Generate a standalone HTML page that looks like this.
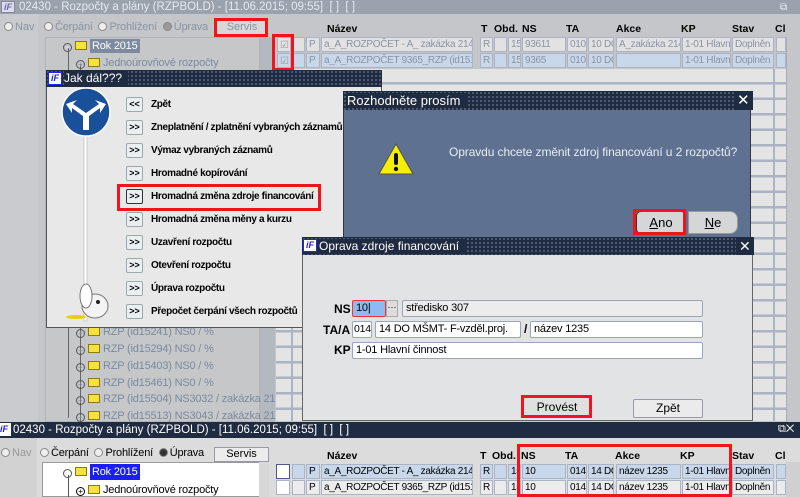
<!DOCTYPE html>
<html><head><meta charset="utf-8">
<style>
*{margin:0;padding:0;box-sizing:border-box}
body{width:800px;height:497px;overflow:hidden;position:relative;background:#c4c6c9;font-family:"Liberation Sans",Arial,sans-serif;font-size:11px;color:#000}
.a{position:absolute}
.c{position:absolute;border:1px solid #aab4c4;background:#e2e2e2;height:15px;line-height:13px;padding-left:2px;white-space:nowrap;overflow:hidden;color:#8a94a4;font-size:10px;letter-spacing:-0.3px}
.sel{background:#c8d8ea}
.h{position:absolute;font-weight:bold;font-size:10.5px}
.tb{position:absolute;height:18px;background:#1f2b40;color:#fff;font-size:13px;line-height:18px;padding-left:4px;
background-image:radial-gradient(#56627a 0.8px,transparent 1.2px);background-size:4px 4px;}
.tb span.t{background:#1f2b40;padding-right:6px}
.btn{position:absolute;width:17px;height:15px;border:1px solid #9aa;background:#eceff2;font-size:9px;font-weight:bold;text-align:center;line-height:13px;border-radius:2px}
.mi{position:absolute;left:151px;font-weight:bold;font-size:10px;letter-spacing:-0.35px;white-space:nowrap}
.fld{position:absolute;height:17px;border:1px solid #9aa6b8;background:#fff;font-size:11px;line-height:15px;padding-left:3px;white-space:nowrap;overflow:hidden;border-radius:2px;letter-spacing:-0.2px}
.lbl{position:absolute;font-weight:bold;font-size:12px}
.red{position:absolute;border:3px solid #f0141e}
.tree{position:absolute;color:#7b8aa0;font-size:11px;white-space:nowrap;letter-spacing:-0.2px}
.fol{display:inline-block;width:12px;height:9px;background:#f6e23c;border:1px solid #8a7a10;vertical-align:-1px;margin-right:3px}
.pl{display:inline-block;width:9px;height:9px;border:1px solid #555;border-radius:50%;vertical-align:-1px;margin-right:3px;font-size:8px;line-height:7px;text-align:center}
.rb{display:inline-block;width:9px;height:9px;border:1px solid #888;border-radius:50%;background:#eee;vertical-align:-1px;margin-right:2px}
</style></head><body>

<div class="a" style="left:0;top:0;width:800px;height:14px;background:#9aa2ae;color:#e6e9ee;font-size:11.5px;line-height:14px;padding-left:19px">02430 - Rozpočty a plány (RZPBOLD) - [11.06.2015; 09:55]&nbsp; [ ]&nbsp; [ ]</div>
<div class="a" style="left:1px;top:1px;width:14px;height:12px;background:#dde;border:1px solid #889;color:#66a;font-size:9px;font-weight:bold;font-style:italic;line-height:10px;text-align:center">iF</div>
<div class="a" style="left:780px;top:2px;color:#eef;font-size:10px">⧉</div>
<div class="a" style="left:0;top:14px;width:38px;height:410px;background:#c9cbce"></div>
<div class="a" style="left:4px;top:21px;color:#8a94a4"><span class="rb"></span>Nav</div>
<div class="a" style="left:44px;top:21px;color:#8a94a4;letter-spacing:-0.2px"><span class="rb"></span>Čerpání &nbsp;<span class="rb"></span>Prohlížení &nbsp;<span class="rb" style="background:#999"></span>Úprava</div>
<div class="a" style="left:217px;top:21px;width:50px;height:14px;background:#d8d8d8;color:#8a94a4;text-align:center;line-height:13px">Servis</div>
<div class="red" style="left:214px;top:18px;width:54px;height:19px"></div>

<div class="a" style="left:45px;top:37px;width:215px;height:385px;background:#c6c7c9;border:1px solid #b0b4ba"></div>
<div class="a" style="left:260px;top:37px;width:15px;height:385px;background:#b4b8bf"></div>
<div class="a" style="left:68px;top:48px;width:1px;height:370px;background:#666"></div>
<div class="a" style="left:80px;top:64px;width:1px;height:360px;background:#666"></div>
<div class="tree" style="left:63px;top:40px;color:#fff"><span class="pl">-</span><span class="fol"></span><span style="background:#7d8aa0;padding:1px 2px">Rok 2015</span></div>
<div class="tree" style="left:76px;top:57px"><span class="pl">+</span><span class="fol"></span>Jednoúrovňové rozpočty</div>
<div class="tree" style="left:76px;top:326px"><span class="pl">+</span><span class="fol"></span>RZP (id15241) NS0 / %</div>
<div class="tree" style="left:76px;top:343px"><span class="pl">+</span><span class="fol"></span>RZP (id15294) NS0 / %</div>
<div class="tree" style="left:76px;top:360px"><span class="pl">+</span><span class="fol"></span>RZP (id15403) NS0 / %</div>
<div class="tree" style="left:76px;top:377px"><span class="pl">+</span><span class="fol"></span>RZP (id15461) NS0 / %</div>
<div class="tree" style="left:76px;top:393px"><span class="pl">+</span><span class="fol"></span>RZP (id15504) NS3032 / zakázka 21289</div>
<div class="tree" style="left:76px;top:410px"><span class="pl">+</span><span class="fol"></span>RZP (id15513) NS3043 / zakázka 21292</div>

<div class="h" style="left:327px;top:23px">Název</div>
<div class="h" style="left:481px;top:23px">T</div>
<div class="h" style="left:494px;top:23px">Obd.</div>
<div class="h" style="left:522px;top:23px">NS</div>
<div class="h" style="left:566px;top:23px">TA</div>
<div class="h" style="left:616px;top:23px">Akce</div>
<div class="h" style="left:681px;top:23px">KP</div>
<div class="h" style="left:732px;top:23px">Stav</div>
<div class="h" style="left:775px;top:23px">Cl</div>

<div class="a" style="left:276px;top:69px;width:511px;height:352px;background:repeating-linear-gradient(#e4e4e4 0 13px,#aab4c4 13px 15.5px)"></div>
<div class="a" style="left:291px;top:69px;width:2px;height:352px;background:#aab4c4"></div>
<div class="a" style="left:773px;top:69px;width:2px;height:352px;background:#aab4c4"></div>
<div class="a" style="left:786px;top:37px;width:14px;height:386px;background:#c4c6c9;border-left:1px solid #aab"></div>

<div class="c" style="left:277px;top:37px;width:14px"></div>
<div class="c" style="left:292px;top:37px;width:13px"></div>
<div class="c" style="left:306px;top:37px;width:14px">P</div>
<div class="c" style="left:321px;top:37px;width:152px">a_A_ROZPOČET - A_ zakázka 21446_</div>
<div class="c" style="left:480px;top:37px;width:13px">R</div>
<div class="c" style="left:494px;top:37px;width:13px"></div>
<div class="c" style="left:508px;top:37px;width:13px">15</div>
<div class="c" style="left:522px;top:37px;width:44px">93611</div>
<div class="c" style="left:567px;top:37px;width:20px">010</div>
<div class="c" style="left:588px;top:37px;width:26px">10 DO</div>
<div class="c" style="left:616px;top:37px;width:65px">A_zakázka 214</div>
<div class="c" style="left:682px;top:37px;width:49px">1-01 Hlavní</div>
<div class="c" style="left:732px;top:37px;width:42px">Doplněn</div>
<div class="c" style="left:776px;top:37px;width:10px"></div>

<div class="c sel" style="left:277px;top:53px;width:14px"></div>
<div class="c sel" style="left:292px;top:53px;width:13px"></div>
<div class="c sel" style="left:306px;top:53px;width:14px">P</div>
<div class="c sel" style="left:321px;top:53px;width:152px">a_A_ROZPOČET 9365_RZP (id15167)</div>
<div class="c sel" style="left:480px;top:53px;width:13px">R</div>
<div class="c sel" style="left:494px;top:53px;width:13px"></div>
<div class="c sel" style="left:508px;top:53px;width:13px">15</div>
<div class="c sel" style="left:522px;top:53px;width:44px">9365</div>
<div class="c sel" style="left:567px;top:53px;width:20px">010</div>
<div class="c sel" style="left:588px;top:53px;width:26px">10 DO</div>
<div class="c sel" style="left:616px;top:53px;width:65px"></div>
<div class="c sel" style="left:682px;top:53px;width:49px">1-01 Hlavní</div>
<div class="c sel" style="left:732px;top:53px;width:42px">Doplněn</div>
<div class="c sel" style="left:776px;top:53px;width:10px"></div>
<div class="a" style="left:280px;top:40px;color:#999;font-size:10px">☑</div>
<div class="a" style="left:280px;top:56px;color:#999;font-size:10px">☑</div>
<div class="red" style="left:272px;top:34px;width:22px;height:37px"></div>

<div class="a" style="left:46px;top:70px;width:336px;height:258px;background:#e8e8e8;border:1px solid #555"></div>
<div class="tb" style="left:46px;top:70px;width:336px;height:17px;line-height:17px;padding-left:18px;font-size:12px"><span class="t">Jak dál???</span></div>
<div class="a" style="left:48px;top:72px;width:14px;height:13px;background:#fff;border:1px solid #22f;color:#22c;font-size:9px;font-weight:bold;font-style:italic;line-height:11px;text-align:center">iF</div>
<svg class="a" style="left:58px;top:88px" width="56" height="240" viewBox="0 0 56 240">
<rect x="26" y="45" width="3" height="188" fill="#fff" stroke="#bbb" stroke-width="0.7"/>
<circle cx="28" cy="24" r="24" fill="#1a4f9a" stroke="#fff" stroke-width="1.5"/>
<path d="M25 42 V28 L14 20 L14 25 L8 16 L19 12 L15 16 L28 25 L41 16 L37 12 L48 16 L42 25 L42 20 L31 28 V42 Z" fill="#fff"/>
<ellipse cx="18" cy="229" rx="10" ry="2" fill="#e8d000"/>
<ellipse cx="37" cy="218" rx="13" ry="12" fill="#f4f4f4" stroke="#777"/>
<circle cx="40" cy="214" r="2" fill="#222"/>
<ellipse cx="28" cy="208" rx="6" ry="12" fill="#fff" stroke="#777"/>
</svg>
<div class="btn" style="left:126px;top:97px">&lt;&lt;</div><div class="mi" style="top:99px">Zpět</div>
<div class="btn" style="left:126px;top:120px">&gt;&gt;</div><div class="mi" style="top:122px">Zneplatnění / zplatnění vybraných záznamů</div>
<div class="btn" style="left:126px;top:143px">&gt;&gt;</div><div class="mi" style="top:145px">Výmaz vybraných záznamů</div>
<div class="btn" style="left:126px;top:166px">&gt;&gt;</div><div class="mi" style="top:168px">Hromadné kopírování</div>
<div class="btn" style="left:126px;top:189px;border-color:#333">&gt;&gt;</div><div class="mi" style="top:191px">Hromadná změna zdroje financování</div>
<div class="btn" style="left:126px;top:212px">&gt;&gt;</div><div class="mi" style="top:214px">Hromadná změna měny a kurzu</div>
<div class="btn" style="left:126px;top:235px">&gt;&gt;</div><div class="mi" style="top:237px">Uzavření rozpočtu</div>
<div class="btn" style="left:126px;top:258px">&gt;&gt;</div><div class="mi" style="top:260px">Otevření rozpočtu</div>
<div class="btn" style="left:126px;top:281px">&gt;&gt;</div><div class="mi" style="top:283px">Úprava rozpočtu</div>
<div class="btn" style="left:126px;top:304px">&gt;&gt;</div><div class="mi" style="top:306px">Přepočet čerpání všech rozpočtů</div>
<div class="red" style="left:117px;top:184px;width:204px;height:27px"></div>

<div class="a" style="left:343px;top:91px;width:408px;height:148px;background:#5e7191;border:1px solid #334"></div>
<div class="tb" style="left:343px;top:91px;width:408px;height:19px;line-height:19px;font-size:13px"><span class="t">Rozhodněte prosím</span></div>
<div class="a" style="left:734px;top:91px;color:#fff;font-size:15px;line-height:19px;background:#1f2b40;padding:0 3px">✕</div>
<svg class="a" style="left:378px;top:143px" width="36" height="32" viewBox="0 0 36 32"><path d="M18 1 L35 31 H1 Z" fill="#f6f000" stroke="#555" stroke-width="1"/><rect x="16" y="10" width="4" height="12" rx="2" fill="#111"/><circle cx="18" cy="26" r="2.2" fill="#111"/></svg>
<div class="a" style="left:449px;top:145px;color:#e8ecf2;font-size:12px;letter-spacing:-0.1px;white-space:nowrap">Opravdu chcete změnit zdroj financování u 2 rozpočtů?</div>
<div class="a" style="left:636px;top:211px;width:50px;height:23px;background:#d4d6d8;border:1px solid #333;border-radius:5px;text-align:center;line-height:21px;font-size:13px"><u>A</u>no</div>
<div class="a" style="left:688px;top:211px;width:50px;height:23px;background:#d4d6d8;border:1px solid #999;border-radius:0 8px 8px 0;text-align:center;line-height:21px;font-size:13px"><u>N</u>e</div>
<div class="red" style="left:633px;top:209px;width:53px;height:26px"></div>

<div class="a" style="left:302px;top:237px;width:451px;height:184px;background:#e2e3e4;border:1px solid #666"></div>
<div class="tb" style="left:302px;top:237px;width:451px;height:18px;line-height:18px;padding-left:17px;font-size:12px"><span class="t">Oprava zdroje financování</span></div>
<div class="a" style="left:736px;top:237px;color:#fff;font-size:14px;line-height:18px;background:#1f2b40;padding:0 3px">✕</div>
<div class="a" style="left:303px;top:239px;width:14px;height:13px;background:#fff;border:1px solid #22f;color:#22c;font-size:9px;font-weight:bold;font-style:italic;line-height:11px;text-align:center">iF</div>
<div class="lbl" style="left:334px;top:302px">NS</div>
<div class="fld" style="left:352px;top:300px;width:34px;background:#8ebaf0;border:1px solid #e33">10|</div>
<div class="a" style="left:386px;top:300px;width:12px;height:17px;background:#ddd;border:1px solid #aaa;font-size:9px;text-align:center;line-height:13px">···</div>
<div class="fld" style="left:402px;top:300px;width:301px;background:#ececec">středisko 307</div>
<div class="lbl" style="left:323px;top:323px">TA/A</div>
<div class="fld" style="left:352px;top:321px;width:20px;padding-left:1px;font-size:10.5px">014</div>
<div class="fld" style="left:375px;top:321px;width:146px">14 DO MŠMT- F-vzděl.proj.</div>
<div class="lbl" style="left:524px;top:322px">/</div>
<div class="fld" style="left:530px;top:321px;width:173px">název 1235</div>
<div class="lbl" style="left:334px;top:343px">KP</div>
<div class="fld" style="left:352px;top:342px;width:351px">1-01 Hlavní činnost</div>
<div class="a" style="left:524px;top:397px;width:66px;height:20px;background:#e0e0e0;text-align:center;line-height:20px;font-size:12px">Provést</div>
<div class="red" style="left:521px;top:395px;width:71px;height:23px"></div>
<div class="a" style="left:633px;top:399px;width:70px;height:19px;background:#ebebeb;border:1px solid #99a;border-radius:2px;text-align:center;line-height:17px;font-size:12px">Zpět</div>

<div class="a" style="left:0;top:422px;width:800px;height:16px;background:#1f2b40;color:#fff;font-size:11.5px;line-height:16px;padding-left:13px">02430 - Rozpočty a plány (RZPBOLD) - [11.06.2015; 09:55]&nbsp; [ ]&nbsp; [ ]</div>
<div class="a" style="left:0;top:423px;width:11px;height:13px;background:#fff;color:#22c;font-size:9px;font-weight:bold;font-style:italic;line-height:13px">iF</div>
<div class="a" style="left:778px;top:423px;color:#fff;font-size:11px">⧉✕</div>
<div class="a" style="left:0;top:438px;width:800px;height:59px;background:#dcdcdc"></div>
<div class="a" style="left:0;top:438px;width:37px;height:59px;background:#d2d2d2"></div>
<div class="a" style="left:1px;top:447px;color:#999"><span class="rb"></span>Nav</div>
<div class="a" style="left:40px;top:447px;letter-spacing:-0.2px"><span class="rb"></span>Čerpání &nbsp;<span class="rb"></span>Prohlížení &nbsp;<span class="rb" style="background:#333;border-color:#888"></span>Úprava</div>
<div class="a" style="left:214px;top:447px;width:55px;height:15px;background:#ececec;border:1px solid #99a;text-align:center;line-height:13px;font-size:11px">Servis</div>
<div class="a" style="left:42px;top:462px;width:218px;height:35px;background:#fff;border:1px solid #999"></div>
<div class="a" style="left:259px;top:462px;width:10px;height:35px;background:#d8d8d8"></div>
<div class="a" style="left:68px;top:475px;width:1px;height:22px;background:#555"></div>
<div class="tree" style="left:63px;top:466px;color:#fff"><span class="pl">-</span><span class="fol"></span><span style="background:#1a1ef0;padding:2px 2px">Rok 2015</span></div>
<div class="tree" style="left:76px;top:484px;color:#000"><span class="pl" style="border-color:#000">+</span><span class="fol"></span>Jednoúrovňové rozpočty</div>

<div class="h" style="left:327px;top:450px">Název</div>
<div class="h" style="left:480px;top:450px">T</div>
<div class="h" style="left:492px;top:450px">Obd.</div>
<div class="h" style="left:521px;top:450px">NS</div>
<div class="h" style="left:565px;top:450px">TA</div>
<div class="h" style="left:615px;top:450px">Akce</div>
<div class="h" style="left:680px;top:450px">KP</div>
<div class="h" style="left:732px;top:450px">Stav</div>
<div class="h" style="left:775px;top:450px">Cl</div>
<div class="a" style="left:786px;top:462px;width:14px;height:35px;background:#d0d0d0"></div>

<div class="c" style="left:276px;top:464px;width:14px;background:#fff;color:#000;border-color:#558"></div>
<div class="c sel" style="left:292px;top:464px;width:13px;color:#000"></div>
<div class="c sel" style="left:306px;top:464px;width:14px;color:#000">P</div>
<div class="c sel" style="left:321px;top:464px;width:152px;color:#000">a_A_ROZPOČET - A_ zakázka 21446_</div>
<div class="c sel" style="left:480px;top:464px;width:13px;color:#000">R</div>
<div class="c sel" style="left:494px;top:464px;width:13px;color:#000"></div>
<div class="c sel" style="left:508px;top:464px;width:13px;color:#000">15</div>
<div class="c sel" style="left:522px;top:464px;width:44px;color:#000">10</div>
<div class="c sel" style="left:567px;top:464px;width:20px;color:#000">014</div>
<div class="c sel" style="left:588px;top:464px;width:26px;color:#000">14 DO</div>
<div class="c sel" style="left:616px;top:464px;width:65px;color:#000">název 1235</div>
<div class="c sel" style="left:682px;top:464px;width:49px;color:#000">1-01 Hlavní</div>
<div class="c sel" style="left:732px;top:464px;width:42px;color:#000">Doplněn</div>
<div class="c sel" style="left:776px;top:464px;width:10px"></div>

<div class="c" style="left:276px;top:480px;width:14px;background:#fff"></div>
<div class="c" style="left:292px;top:480px;width:13px;background:#ececec;color:#000"></div>
<div class="c" style="left:306px;top:480px;width:14px;background:#ececec;color:#000">P</div>
<div class="c" style="left:321px;top:480px;width:152px;background:#ececec;color:#000">a_A_ROZPOČET 9365_RZP (id15167)</div>
<div class="c" style="left:480px;top:480px;width:13px;background:#ececec;color:#000">R</div>
<div class="c" style="left:494px;top:480px;width:13px;background:#ececec"></div>
<div class="c" style="left:508px;top:480px;width:13px;background:#ececec;color:#000">15</div>
<div class="c" style="left:522px;top:480px;width:44px;background:#ececec;color:#000">10</div>
<div class="c" style="left:567px;top:480px;width:20px;background:#ececec;color:#000">014</div>
<div class="c" style="left:588px;top:480px;width:26px;background:#ececec;color:#000">14 DO</div>
<div class="c" style="left:616px;top:480px;width:65px;background:#ececec;color:#000">název 1235</div>
<div class="c" style="left:682px;top:480px;width:49px;background:#ececec;color:#000">1-01 Hlavní</div>
<div class="c" style="left:732px;top:480px;width:42px;background:#ececec;color:#000">Doplněn</div>
<div class="c" style="left:776px;top:480px;width:10px;background:#ececec"></div>
<div class="red" style="left:517px;top:444px;width:215px;height:53px"></div>
</body></html>
